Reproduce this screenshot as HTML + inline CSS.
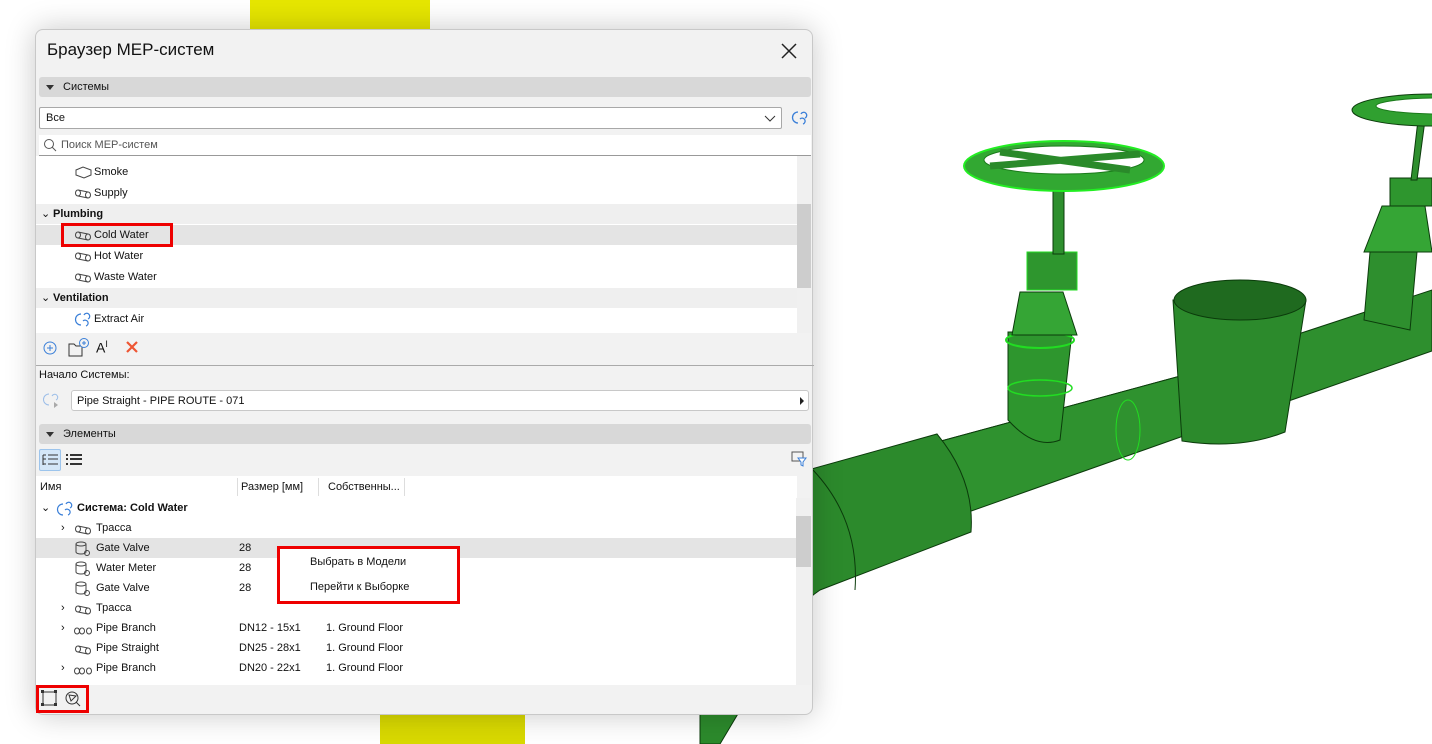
<!DOCTYPE html>
<html><head><meta charset="utf-8"><style>
*{margin:0;padding:0;box-sizing:border-box}
body{width:1432px;height:744px;overflow:hidden;background:#fff;position:relative;font-family:"Segoe UI","Liberation Sans","Noto Sans CJK SC",sans-serif;font-size:11px;color:#111}
.a{position:absolute}
.dlg{left:35px;top:29px;width:778px;height:686px;background:#f2f2f2;border:1px solid #c8c8c8;border-radius:8px;box-shadow:0 0 30px rgba(0,0,0,.22)}
.hdr{background:#d8d8d8;border-radius:3px;height:20px;left:3px;width:772px}
.hdr span{position:absolute;left:24px;top:4px;font-size:11px}
.tri{position:absolute;left:7px;top:8px;border-left:4px solid transparent;border-right:4px solid transparent;border-top:5px solid #333}
.row{position:absolute;height:20px;line-height:21px;white-space:nowrap}
.t{position:absolute;top:0}
svg{position:absolute}
</style></head><body>
<div class="a" style="left:250px;top:0;width:180px;height:30px;background:#e6e600"></div>
<div class="a" style="left:380px;top:712px;width:145px;height:32px;background:#d9d900"></div>
<svg width="1432" height="744" style="left:0;top:0">
<g stroke="#0b3b0b" stroke-width="1">
<!-- right pipe -->
<polygon points="1280,340 1432,290 1432,351 1280,404" fill="#2e8f2e"/>
<!-- narrow middle pipe -->
<polygon points="930,444 1184,375 Q1230,400 1223,422 1223,422 960,515" fill="#2e8f2e"/>
<path d="M930,444 L1184,375 Q1228,398 1223,422 L960,515 Z" fill="#2f922f"/>
<!-- big left segment and bend -->
<path d="M700,500 L937,434 Q975,480 971,532 L820,590 Q790,610 770,660 L720,744 L700,744 Z" fill="#2c8a2c"/>
<path d="M813,470 Q860,520 855,590" stroke="#0b3b0b" fill="none"/>
<!-- tank -->
<path d="M1173,300 L1182,441 Q1240,450 1285,432 L1306,300 Z" fill="#2c8a2c"/>
<ellipse cx="1240" cy="300" rx="66" ry="20" fill="#1f6a1f"/>
<!-- valve 1 -->
<path d="M1008,332 L1008,420 Q1035,450 1060,440 L1072,332 Z" fill="#2e962e"/>
<ellipse cx="1040" cy="340" rx="34" ry="8" fill="none" stroke="#22dd22" stroke-width="2"/>
<ellipse cx="1040" cy="388" rx="32" ry="8" fill="none" stroke="#22dd22" stroke-width="1.5"/>
<polygon points="1020,292 1063,292 1077,335 1012,335" fill="#35a535"/>
<rect x="1027" y="252" width="50" height="38" fill="#2e962e" stroke="#22dd22"/>
<rect x="1053" y="190" width="11" height="64" fill="#2e8f2e"/>
<ellipse cx="1064" cy="166" rx="100" ry="25" fill="#32a832" stroke="#22ee22" stroke-width="2"/>
<ellipse cx="1064" cy="160" rx="80" ry="14" fill="#fff" stroke="#1a7a1a"/>
<path d="M990,166 L1140,154 M1000,152 L1130,170" stroke="#2a8a2a" stroke-width="7"/>
<ellipse cx="1128" cy="430" rx="12" ry="30" fill="none" stroke="#22dd22"/>
<!-- valve 2 -->
<path d="M1364,320 L1370,252 L1417,252 L1410,330 Z" fill="#2e8f2e"/>
<polygon points="1382,206 1425,206 1432,252 1364,252" fill="#35a535"/>
<rect x="1390" y="178" width="42" height="28" fill="#2e962e"/>
<polygon points="1418,120 1425,120 1417,180 1411,180" fill="#2e8f2e"/>
<ellipse cx="1432" cy="110" rx="80" ry="16" fill="#30a030"/>
<ellipse cx="1440" cy="106" rx="64" ry="8" fill="#fff" stroke="#1a7a1a"/>
</g>
</svg>
<div class="a dlg">
<div class="a" style="left:11px;top:10px;font-size:17px;color:#111">Браузер МЕР-систем</div>
<svg style="left:745px;top:13px" width="16" height="16"><path d="M1,1L15,15M15,1L1,15" stroke="#222" stroke-width="1.5"/></svg>
<div class="a hdr" style="top:47px"><div class="tri"></div><span>Системы</span></div>
<div class="a" style="left:3px;top:77px;width:743px;height:22px;background:#fff;border:1px solid #a8a8a8;border-radius:2px"><span style="position:absolute;left:6px;top:4px">Все</span>
<svg style="left:724px;top:7px" width="12" height="8"><path d="M1,1L6,6L11,1" stroke="#333" fill="none"/></svg></div>
<svg style="left:755px;top:79px" width="18" height="18"><path d="M7,3a5,5 0 1 0 0,11M10,5a3,3 0 1 1 4,4M9,10a3,3 0 1 1 3,5" stroke="#3a7fd8" fill="none" stroke-width="1.3"/></svg>
<div class="a" style="left:3px;top:105px;width:772px;height:21px;background:#fff;border-bottom:1px solid #999"><svg style="left:4px;top:3px" width="14" height="14"><circle cx="6" cy="6" r="4.5" stroke="#555" fill="none"/><path d="M9,9L13,13" stroke="#555"/></svg><span style="position:absolute;left:22px;top:4px;color:#555">Поиск МЕР-систем</span></div>
<div class="a" style="left:0;top:126px;width:761px;height:177px;background:#fff;overflow:hidden">
<div class="row" style="top:6px"><span class="t" style="left:58px">Smoke</span></div>
<div class="row" style="top:27px"><span class="t" style="left:58px">Supply</span></div>
<div class="row" style="top:48px;width:761px;background:#efefef;font-weight:bold"><span class="t" style="left:5px;font-weight:normal">&#8964;</span><span class="t" style="left:17px">Plumbing</span></div>
<div class="row" style="top:69px;width:761px;background:#e4e4e4"><span class="t" style="left:58px">Cold Water</span></div>
<div class="row" style="top:90px"><span class="t" style="left:58px">Hot Water</span></div>
<div class="row" style="top:111px"><span class="t" style="left:58px">Waste Water</span></div>
<div class="row" style="top:132px;width:761px;background:#efefef;font-weight:bold"><span class="t" style="left:5px;font-weight:normal">&#8964;</span><span class="t" style="left:17px">Ventilation</span></div>
<div class="row" style="top:153px"><span class="t" style="left:58px">Extract Air</span></div>
<svg style="left:38px;top:10px" width="20" height="170"><g stroke="#444" fill="none"><path d="M2,4l7,-3l8,3v5l-7,3l-8,-3z"/><ellipse cx="4" cy="27" rx="2.5" ry="3"/><path d="M4,24l10,2M4,30l10,2"/><ellipse cx="14" cy="29" rx="2.5" ry="3"/><ellipse cx="4" cy="69" rx="2.5" ry="3"/><path d="M4,66l10,2M4,72l10,2"/><ellipse cx="14" cy="71" rx="2.5" ry="3"/><ellipse cx="4" cy="90" rx="2.5" ry="3"/><path d="M4,87l10,2M4,93l10,2"/><ellipse cx="14" cy="92" rx="2.5" ry="3"/><ellipse cx="4" cy="111" rx="2.5" ry="3"/><path d="M4,108l10,2M4,114l10,2"/><ellipse cx="14" cy="113" rx="2.5" ry="3"/></g><path d="M7,148a5,5 0 1 0 0,11M10,149a3,3 0 1 1 4,4M9,155a3,3 0 1 1 3,5" stroke="#3a7fd8" fill="none" stroke-width="1.2"/></svg>
</div>
<div class="a" style="left:761px;top:126px;width:14px;height:177px;background:#f0f0f0"><div class="a" style="left:0;top:48px;width:14px;height:84px;background:#cdcdcd"></div></div>
<div class="a" style="left:25px;top:193px;width:112px;height:24px;border:3px solid #e00"></div>
<svg style="left:6px;top:308px" width="110" height="20"><circle cx="8" cy="10" r="6" stroke="#3a7fd8" fill="none"/><path d="M5,10h6M8,7v6" stroke="#3a7fd8"/><path d="M27,6h5l2,2h6v10h-13z" stroke="#333" fill="none"/><circle cx="42" cy="5" r="4.5" stroke="#3a7fd8" fill="#f2f2f2"/><path d="M40,5h4M42,3v4" stroke="#3a7fd8"/><path d="M85,4l10,10M95,4l-10,10" stroke="#e53" stroke-width="2.2"/></svg>
<div class="a" style="left:60px;top:309px;font-size:14px">A<sup style="font-size:9px">I</sup></div>
<div class="a" style="left:0;top:335px;width:778px;border-top:1px solid #aaa"></div>
<div class="a" style="left:3px;top:339px">Начало Системы:</div>
<svg style="left:6px;top:361px" width="18" height="18"><path d="M7,3a5,5 0 1 0 0,11M10,5a3,3 0 1 1 4,4" stroke="#9bbde8" fill="none"/><path d="M12,11l4,3l-4,3z" fill="#aaa"/></svg>
<div class="a" style="left:35px;top:360px;width:738px;height:21px;background:#fff;border:1px solid #c8c8c8;border-radius:3px"><span style="position:absolute;left:5px;top:4px">Pipe Straight - PIPE ROUTE - 071</span><div class="a" style="right:4px;top:6px;border-top:4px solid transparent;border-bottom:4px solid transparent;border-left:4px solid #222"></div></div>
<div class="a hdr" style="top:394px"><div class="tri"></div><span>Элементы</span></div>
<div class="a" style="left:3px;top:419px;width:22px;height:22px;background:#d4e6f8;border:1px solid #9cc4ec;border-radius:2px"></div>
<svg style="left:6px;top:423px" width="44" height="14"><g stroke="#333"><path d="M1,2h3M1,2v10M1,6h3M1,11h3M6,2h10M6,6h10M6,11h10"/><path d="M24,2h2M24,6h2M24,11h2M28,2h12M28,6h12M28,11h12" stroke-width="2"/></g></svg>
<svg style="left:755px;top:421px" width="16" height="16"><rect x="1" y="1" width="11" height="9" stroke="#555" fill="none"/><path d="M7,7h8l-3,4v4l-2,-1v-3z" fill="#fff" stroke="#3a7fd8"/></svg>
<div class="a" style="left:0;top:446px;width:761px;height:209px;background:#fff;overflow:hidden">
<div class="row" style="top:0px;height:22px;line-height:23px"><span class="t" style="left:4px">Имя</span><span class="t" style="left:205px">Размер [мм]</span><span class="t" style="left:292px">Собственны...</span></div>
<div class="a" style="left:201px;top:2px;height:18px;border-left:1px solid #ddd"></div>
<div class="a" style="left:282px;top:2px;height:18px;border-left:1px solid #ddd"></div>
<div class="a" style="left:368px;top:2px;height:18px;border-left:1px solid #ddd"></div>
<div class="row" style="top:22px"><span class="t" style="left:5px">&#8964;</span><span class="t" style="left:41px;font-weight:bold">Система: Cold Water</span></div>
<div class="row" style="top:42px"><span class="t" style="left:25px">›</span><span class="t" style="left:60px">Трасса</span></div>
<div class="row" style="top:62px;width:761px;background:#e4e4e4"><span class="t" style="left:60px">Gate Valve</span><span class="t" style="left:203px">28</span></div>
<div class="row" style="top:82px"><span class="t" style="left:60px">Water Meter</span><span class="t" style="left:203px">28</span></div>
<div class="row" style="top:102px"><span class="t" style="left:60px">Gate Valve</span><span class="t" style="left:203px">28</span></div>
<div class="row" style="top:122px"><span class="t" style="left:25px">›</span><span class="t" style="left:60px">Трасса</span></div>
<div class="row" style="top:142px"><span class="t" style="left:25px">›</span><span class="t" style="left:60px">Pipe Branch</span><span class="t" style="left:203px">DN12 - 15x1</span><span class="t" style="left:290px">1. Ground Floor</span></div>
<div class="row" style="top:162px"><span class="t" style="left:60px">Pipe Straight</span><span class="t" style="left:203px">DN25 - 28x1</span><span class="t" style="left:290px">1. Ground Floor</span></div>
<div class="row" style="top:182px"><span class="t" style="left:25px">›</span><span class="t" style="left:60px">Pipe Branch</span><span class="t" style="left:203px">DN20 - 22x1</span><span class="t" style="left:290px">1. Ground Floor</span></div>
<svg style="left:20px;top:25px" width="20" height="18"><path d="M7,3a5,5 0 1 0 0,11M10,3a3,3 0 1 1 4,4M9,9a3,3 0 1 1 3,5" stroke="#3a7fd8" fill="none" stroke-width="1.2"/></svg>
<svg style="left:38px;top:46px" width="20" height="160"><g stroke="#444" fill="none"><ellipse cx="4" cy="7" rx="2.5" ry="3"/><path d="M4,4l10,2M4,10l10,2"/><ellipse cx="14" cy="9" rx="2.5" ry="3"/>
<path d="M2,22v8a5,2 0 0 0 10,0v-8M2,22a5,2 0 0 0 10,0a5,2 0 0 0 -10,0"/><circle cx="13" cy="31" r="2.5"/>
<path d="M2,42v8a5,2 0 0 0 10,0v-8M2,42a5,2 0 0 0 10,0a5,2 0 0 0 -10,0"/><circle cx="13" cy="51" r="2.5"/>
<path d="M2,62v8a5,2 0 0 0 10,0v-8M2,62a5,2 0 0 0 10,0a5,2 0 0 0 -10,0"/><circle cx="13" cy="71" r="2.5"/>
<ellipse cx="4" cy="87" rx="2.5" ry="3"/><path d="M4,84l10,2M4,90l10,2"/><ellipse cx="14" cy="89" rx="2.5" ry="3"/>
<ellipse cx="3" cy="109" rx="2.5" ry="3"/><ellipse cx="8" cy="109" rx="2.5" ry="3"/><ellipse cx="15" cy="109" rx="2.5" ry="3"/>
<ellipse cx="4" cy="127" rx="2.5" ry="3"/><path d="M4,124l10,2M4,130l10,2"/><ellipse cx="14" cy="129" rx="2.5" ry="3"/>
<ellipse cx="3" cy="149" rx="2.5" ry="3"/><ellipse cx="8" cy="149" rx="2.5" ry="3"/><ellipse cx="15" cy="149" rx="2.5" ry="3"/></g></svg>
</div>
<div class="a" style="left:760px;top:468px;width:15px;height:187px;background:#f0f0f0"><div class="a" style="left:0;top:18px;width:15px;height:51px;background:#cdcdcd"></div></div>
<div class="a" style="left:241px;top:516px;width:183px;height:58px;background:#fff;border:3px solid #e00"><div class="a" style="left:30px;top:7px">Выбрать в Модели</div><div class="a" style="left:30px;top:32px">Перейти к Выборке</div></div>
<div class="a" style="left:0;top:655px;width:53px;height:28px;border:3px solid #e00"></div>
<svg style="left:5px;top:660px" width="46" height="18"><rect x="2" y="2" width="13" height="13" stroke="#333" fill="none"/><g fill="#333"><rect x="0" y="0" width="3" height="3"/><rect x="13" y="0" width="3" height="3"/><rect x="0" y="13" width="3" height="3"/><rect x="13" y="13" width="3" height="3"/></g><circle cx="31" cy="8" r="6" stroke="#333" fill="none"/><path d="M28,5l7,1l-5,5zM35,12l4,4" stroke="#333" fill="none"/></svg>
</div>
</body></html>
